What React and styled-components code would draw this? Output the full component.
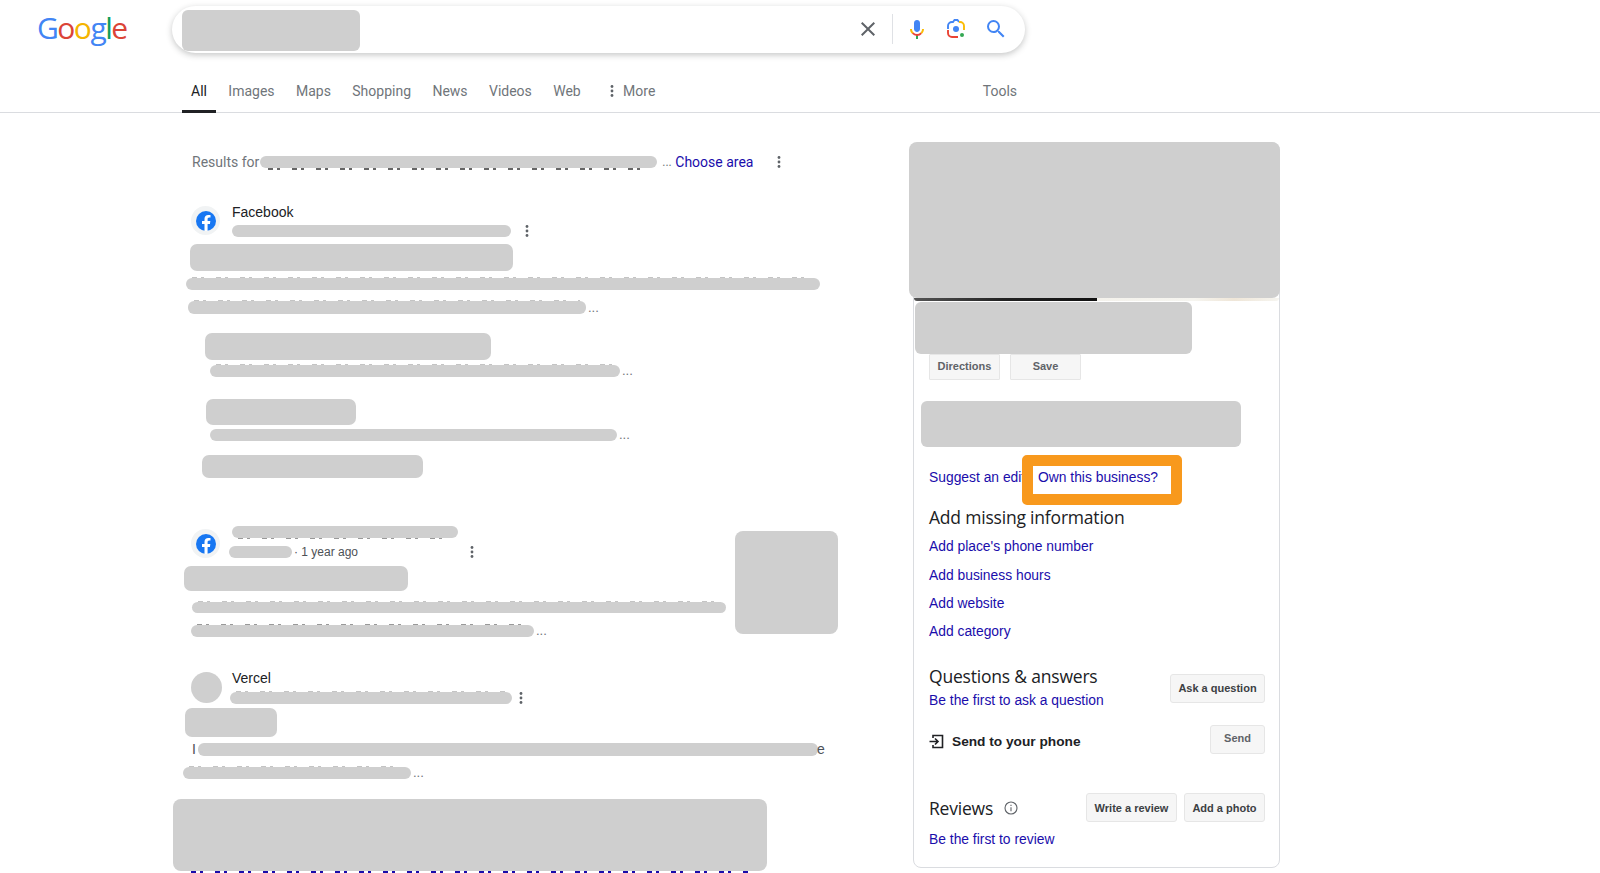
import React from 'react';
import styled, { createGlobalStyle, css } from 'styled-components';

const Global = createGlobalStyle`
  html, body { margin: 0; padding: 0; background: #fff; }
  body { font-family: "Liberation Sans", Arial, sans-serif; color: #202124; overflow: hidden; }
  * { box-sizing: border-box; }
`;

const Page = styled.div`
  width: 1600px;
  height: 873px;
  overflow: hidden;
`;

const TopRow = styled.header`
  display: flex;
  align-items: center;
  height: 57px;
  padding-left: 37px;
`;

const Logo = styled.div`
  width: 135px;
  margin-top: -2px;
  font-family: "Open Sans", sans-serif;
  font-size: 30px;
  letter-spacing: -1.5px;
  line-height: 40px;
`;

const Letter = styled.span`
  color: ${p => p.$c};
`;

const SearchBox = styled.div`
  width: 853px;
  height: 47px;
  margin-top: 1px;
  border-radius: 24px;
  background: #fff;
  box-shadow: 0 2px 6px rgba(32, 33, 36, 0.26);
  display: flex;
  align-items: center;
  padding-left: 10px;
`;

/* grey redaction block; $peek leaves a sliver of the covered line showing */
const Blot = styled.div`
  background: #cfcfcf;
  border-radius: ${p => p.$r || 6}px;
  width: ${p => p.$w}px;
  height: ${p => p.$h}px;
  margin-left: ${p => p.$x || 0}px;
  margin-top: ${p => p.$t || 0}px;
  flex: none;
  ${p => p.$peek && css`
    position: relative;
    &::after {
      content: "";
      position: absolute;
      left: ${p.$inset || 6}px;
      right: ${p.$inset || 6}px;
      ${p.$peek}: -${p.$sliver || 1}px;
      height: ${p.$sliver || 1}px;
      background: repeating-linear-gradient(90deg, ${p.$ink} 0 5px, transparent 5px 9px, ${p.$ink} 9px 12px, transparent 12px 24px);
    }
  `}
`;

const SearchIcons = styled.div`
  margin-left: auto;
  display: flex;
  align-items: center;
  padding-right: 17px;
`;

const IconSlot = styled.span`
  display: flex;
  margin-left: ${p => p.$l}px;
`;

const Divider = styled.span`
  width: 1px;
  height: 30px;
  background: #dfe1e5;
  margin-left: 12px;
`;

const Tabs = styled.nav`
  display: flex;
  height: 56px;
  border-bottom: 1px solid #dadce0;
  padding-left: 182px;
  font-family: Roboto, sans-serif;
  font-size: 14px;
  align-items: stretch;
`;

const Tab = styled.div`
  display: flex;
  align-items: center;
  gap: 9px;
  padding: 14px 9px 0;
  margin-right: 3.4px;
  margin-bottom: -1px;
  color: ${p => (p.$active ? '#202124' : '#70757a')};
  border-bottom: 3px solid ${p => (p.$active ? '#202124' : 'transparent')};
`;

const MoreTab = styled(Tab)`
  margin-left: 8px;
`;

const ToolsTab = styled(Tab)`
  margin-left: 306px;
`;

const Main = styled.main`
  display: flex;
  align-items: flex-start;
`;

const LeftCol = styled.div`
  width: 908px;
  padding-left: 173px;
  flex: none;
`;

const ResultsFor = styled.div`
  display: flex;
  align-items: center;
  height: 20px;
  margin: 39px 0 0 19px;
  font-family: Roboto, sans-serif;
  font-size: 14px;
  color: #70757a;
`;

const AfterStrip = styled.span`
  width: 18px;
  flex: none;
  padding-left: 5px;
  font-size: 12px;
`;

const ChooseArea = styled.a`
  color: #1a0dab;
`;

const Dots = styled.svg`
  flex: none;
  display: block;
  margin-left: ${p => p.$x || 0}px;
`;

const More = ({ x }) => (
  <Dots $x={x} width="4" height="14" viewBox="0 0 4 14" fill="#5f6368">
    <circle cx="2" cy="2.5" r="1.4" />
    <circle cx="2" cy="7" r="1.4" />
    <circle cx="2" cy="11.5" r="1.4" />
  </Dots>
);

const Source = styled.div`
  display: flex;
  align-items: center;
  margin: ${p => p.$t}px 0 0 18px;
`;

const Favicon = styled.div`
  width: ${p => (p.$blank ? 31 : 29)}px;
  height: ${p => (p.$blank ? 31 : 29)}px;
  margin-right: ${p => (p.$blank ? -2 : 0)}px;
  border-radius: 50%;
  background: ${p => (p.$blank ? '#cfcfcf' : '#f1f3f4')};
  display: flex;
  align-items: center;
  justify-content: center;
  flex: none;
`;

const SourceText = styled.div`
  margin-left: 12px;
  font-size: 14px;
  line-height: 18px;
`;

const SourceLine = styled.div`
  display: flex;
  align-items: center;
  margin-top: ${p => p.$gap}px;
`;

const Ago = styled.span`
  font-size: 12px;
  color: #4d5156;
  margin-left: 2px;
`;

const Ellipsis = styled.span`
  font-size: 13px;
  color: #70757a;
  margin-left: 2px;
  line-height: 12px;
`;

const Line = styled.div`
  display: flex;
  align-items: flex-end;
  margin-left: ${p => p.$x || 0}px;
  margin-top: ${p => p.$t || 0}px;
`;

const StrayLetter = styled.span`
  font-size: 14px;
  line-height: 13px;
  color: #4d5156;
  margin-left: ${p => p.$l || 0}px;
`;

const VideoRow = styled.div`
  display: flex;
  align-items: flex-start;
`;

const VideoText = styled.div`
  width: 562px;
  flex: none;
`;

const Panel = styled.aside`
  width: 367px;
  height: 726px;
  margin: 29px 0 0 5px;
  border: 1px solid #dadce0;
  border-radius: 8px;
  position: relative;
  flex: none;
`;

const PanelTopBlot = styled.div`
  position: absolute;
  top: -1px;
  left: -5px;
  width: 371px;
  height: 156px;
  background: #cfcfcf;
  border-radius: 8px;
`;

const MapStrip = styled.div`
  height: 3px;
  margin-top: 155px;
  border-radius: 0 0 3px 3px;
  background: linear-gradient(to right, #555 0, #222 90px, #111 183px, #f4f2ec 183px, #f6f5f0 280px, #efe6d8 320px, #f6f5f0 365px);
`;

const ActionRow = styled.div`
  display: flex;
  gap: 10px;
  margin-left: 15px;
`;

const GreyButton = styled.div`
  display: flex;
  align-items: center;
  justify-content: center;
  height: ${p => p.$h || 28}px;
  width: ${p => p.$w}px;
  margin-top: ${p => p.$t || 0}px;
  padding-bottom: ${p => p.$lift || 0}px;
  background: #f6f6f6;
  border: 1px solid #e6e6e6;
  border-radius: ${p => p.$r || 3}px;
  font-size: 11px;
  font-weight: 700;
  color: ${p => p.$ink || '#5f6368'};
  flex: none;
`;

const EditRow = styled.div`
  display: flex;
  align-items: flex-start;
  height: 50px;
  margin: 8px 0 0 15px;
`;

const Link = styled.a`
  display: block;
  color: #1a0dab;
  font-size: 13.85px;
  line-height: 18px;
`;

const SuggestLink = styled(Link)`
  width: 93px;
  margin-top: 13px;
  white-space: nowrap;
  flex: none;
`;

const Highlight = styled.div`
  position: relative;
  width: 160px;
  height: 50px;
  border: 11px solid #f8991d;
  border-radius: 5px;
  background: #fff;
  padding: 2px 0 0 5px;
  flex: none;
`;

const Section = styled.div`
  margin: ${p => p.$t || 0}px 14px 0 15px;
`;

const Heading = styled.h3`
  margin: 0;
  font-family: "Open Sans", sans-serif;
  font-weight: 400;
  font-size: 17.5px;
  line-height: 24px;
  letter-spacing: -0.2px;
  color: #202124;
`;

const SpacedLink = styled(Link)`
  margin-top: ${p => p.$t}px;
`;

const SplitRow = styled.div`
  display: flex;
  justify-content: space-between;
  align-items: center;
`;

const SendLabel = styled.div`
  display: flex;
  align-items: center;
  gap: 8px;
  margin-top: 4px;
  font-size: 13.7px;
  font-weight: 700;
  color: #202124;
`;

const ButtonPair = styled.div`
  display: flex;
  gap: 7px;
`;

const ReviewTitle = styled.div`
  display: flex;
  align-items: center;
  gap: 11px;
`;

const GoogleLogo = () => (
  <Logo aria-label="Google">
    <Letter $c="#4285f4">G</Letter>
    <Letter $c="#db4437">o</Letter>
    <Letter $c="#f4b400">o</Letter>
    <Letter $c="#4285f4">g</Letter>
    <Letter $c="#0f9d58">l</Letter>
    <Letter $c="#db4437">e</Letter>
  </Logo>
);

const FbIcon = () => (
  <svg width="20" height="20" viewBox="0 0 24 24">
    <circle cx="12" cy="12" r="12" fill="#1877f2" />
    <path
      fill="#fff"
      d="M16.7 15.5l.5-3.5h-3.3V9.8c0-1 .5-1.9 2-1.9h1.5v-3s-1.4-.2-2.7-.2c-2.7 0-4.5 1.7-4.5 4.6V12h-3v3.5h3V24h3.7v-8.5h2.8z"
    />
  </svg>
);

const ClearIcon = () => (
  <svg width="24" height="24" viewBox="0 0 24 24" fill="#5f6368">
    <path d="M19 6.41 17.59 5 12 10.59 6.41 5 5 6.41 10.59 12 5 17.59 6.41 19 12 13.41 17.59 19 19 17.59 13.41 12z" />
  </svg>
);

const MicIcon = () => (
  <svg width="24" height="24" viewBox="0 0 24 24">
    <path fill="#4285f4" d="M12 15c1.66 0 3-1.31 3-2.97V5.97C15 4.31 13.66 3 12 3S9 4.31 9 5.97v6.06C9 13.69 10.34 15 12 15z" />
    <path fill="#34a853" d="M11 18.08h2V22h-2z" />
    <path fill="#fbbc05" d="M7.05 16.87c-1.27-1.33-2.05-2.83-2.05-4.87h2c0 1.45.56 2.42 1.47 3.38v.32l-1.15 1.18z" />
    <path fill="#ea4335" d="M12 16.93a4.97 5.25 0 0 1-3.54-1.55l-1.41 1.49A6.95 7.35 0 0 0 12 19a6.95 7.35 0 0 0 5-2.2l-1.41-1.41A4.97 5.25 0 0 1 12 16.93z" />
    <path fill="#fbbc05" d="M17 12c0 1.4-.5 2.5-1.4 3.4l1.4 1.4c1.3-1.3 2-2.9 2-4.8z" />
  </svg>
);

const LensIcon = () => (
  <svg width="24" height="24" viewBox="0 0 24 24" fill="none" strokeWidth="1.9">
    <path stroke="#ea4335" d="M4 13v3a4 4 0 0 0 4 4h6" />
    <path stroke="#4285f4" d="M4 12V9a4 4 0 0 1 4-4h1l1.5-2h3L15 5" />
    <path stroke="#fbbc05" d="M15 5h1a4 4 0 0 1 4 4v4" />
    <circle cx="12" cy="12" r="3" fill="#4285f4" />
    <circle cx="18" cy="18" r="2" fill="#34a853" />
  </svg>
);

const SearchIcon = () => (
  <svg width="24" height="24" viewBox="0 0 24 24" fill="#4285f4">
    <path d="M15.5 14h-.79l-.28-.27A6.47 6.47 0 0 0 16 9.5 6.5 6.5 0 1 0 9.5 16c1.61 0 3.09-.59 4.23-1.57l.27.28v.79l5 4.99L20.49 19l-4.99-5zm-6 0C7.01 14 5 11.99 5 9.5S7.01 5 9.5 5 14 7.01 14 9.5 11.99 14 9.5 14z" />
  </svg>
);

const SendIcon = () => (
  <svg width="15" height="15" viewBox="0 0 15 15" fill="none" stroke="#202124" strokeWidth="1.6">
    <path d="M4 4V1.5h9.5v12H4V11" />
    <path d="M0.5 7.5h8M6 4.5l3 3-3 3" />
  </svg>
);

const InfoIcon = () => (
  <svg width="14" height="14" viewBox="0 0 14 14" fill="none" stroke="#5f6368" strokeWidth="1.1">
    <circle cx="7" cy="7" r="6" />
    <path d="M7 6.2v4M7 3.8v1.2" />
  </svg>
);

export default function App() {
  return (
    <Page>
      <Global />
      <TopRow>
        <GoogleLogo />
        <SearchBox>
          <Blot $w={178} $h={41} $t={2} />
          <SearchIcons>
            <IconSlot $l={0}><ClearIcon /></IconSlot>
            <Divider />
            <IconSlot $l={12}><MicIcon /></IconSlot>
            <IconSlot $l={15}><LensIcon /></IconSlot>
            <IconSlot $l={16}><SearchIcon /></IconSlot>
          </SearchIcons>
        </SearchBox>
      </TopRow>

      <Tabs>
        <Tab $active>All</Tab>
        <Tab>Images</Tab>
        <Tab>Maps</Tab>
        <Tab>Shopping</Tab>
        <Tab>News</Tab>
        <Tab>Videos</Tab>
        <Tab>Web</Tab>
        <MoreTab><More />More</MoreTab>
        <ToolsTab>Tools</ToolsTab>
      </Tabs>

      <Main>
        <LeftCol>
          <ResultsFor>
            Results for
            <Blot $x={1} $w={397} $h={12} $r={6} $peek="bottom" $ink="#666" $inset={8} $sliver={2} />
            <AfterStrip>...</AfterStrip>
            <ChooseArea>Choose area</ChooseArea>
            <More x={24} />
          </ResultsFor>

          <Source $t={31}>
            <Favicon><FbIcon /></Favicon>
            <SourceText>
              Facebook
              <SourceLine $gap={3}>
                <Blot $w={279} $h={12} $r={6} />
                <More x={14} />
              </SourceLine>
            </SourceText>
          </Source>
          <Blot $x={17} $t={6} $w={323} $h={27} $r={7} />
          <Line $x={13} $t={7}><Blot $w={634} $h={12} $r={6} $peek="top" $ink="#c4c4c4" /></Line>
          <Line $x={15} $t={11}><Blot $w={398} $h={13} $r={6} $peek="top" $ink="#c4c4c4" /><Ellipsis>...</Ellipsis></Line>

          <Blot $x={32} $t={19} $w={286} $h={27} $r={7} />
          <Line $x={37} $t={5}><Blot $w={410} $h={12} $r={6} $peek="top" $ink="#c4c4c4" /><Ellipsis>...</Ellipsis></Line>
          <Blot $x={33} $t={22} $w={150} $h={26} $r={7} />
          <Line $x={37} $t={4}><Blot $w={407} $h={12} $r={6} /><Ellipsis>...</Ellipsis></Line>
          <Blot $x={29} $t={14} $w={221} $h={23} $r={7} />

          <VideoRow>
            <VideoText>
              <Source $t={48}>
                <Favicon><FbIcon /></Favicon>
                <SourceText>
                  <Blot $w={226} $h={12} $r={6} $peek="bottom" $ink="#999" />
                  <SourceLine $gap={5}>
                    <Blot $x={-3} $w={63} $h={12} $r={6} />
                    <Ago>· 1 year ago</Ago>
                    <More x={112} />
                  </SourceLine>
                </SourceText>
              </Source>
              <Blot $x={11} $t={5} $w={224} $h={25} $r={7} />
              <Line $x={19} $t={11}><Blot $w={534} $h={11} $r={6} $peek="top" $ink="#c4c4c4" /></Line>
              <Line $x={18} $t={12}><Blot $w={343} $h={12} $r={6} $peek="top" $ink="#999" /><Ellipsis>...</Ellipsis></Line>
            </VideoText>
            <Blot $t={53} $w={103} $h={103} $r={8} />
          </VideoRow>

          <Source $t={32}>
            <Favicon $blank />
            <SourceText>
              Vercel
              <SourceLine $gap={4}>
                <Blot $x={-2} $w={282} $h={12} $r={6} $peek="top" $ink="#c4c4c4" />
                <More x={7} />
              </SourceLine>
            </SourceText>
          </Source>
          <Blot $x={12} $t={3} $w={92} $h={29} $r={7} />
          <Line $x={19} $t={6}>
            <StrayLetter>I</StrayLetter>
            <Blot $x={2} $w={620} $h={13} $r={6} />
            <StrayLetter $l={-1}>e</StrayLetter>
          </Line>
          <Line $x={10} $t={11}><Blot $w={228} $h={12} $r={6} $peek="top" $ink="#c4c4c4" /><Ellipsis>...</Ellipsis></Line>
          <Blot $t={20} $w={594} $h={72} $r={8} $peek="bottom" $ink="#1a0dab" $inset={18} $sliver={2} />
        </LeftCol>

        <Panel>
          <PanelTopBlot />
          <MapStrip />
          <Blot $x={1} $t={1} $w={277} $h={52} />
          <ActionRow>
            <GreyButton $w={71} $h={26} $r={1} $lift={2}>Directions</GreyButton>
            <GreyButton $w={71} $h={26} $r={1} $lift={2}>Save</GreyButton>
          </ActionRow>
          <Blot $x={7} $t={21} $w={320} $h={46} />
          <EditRow>
            <SuggestLink>Suggest an edit</SuggestLink>
            <Highlight><Link>Own this business?</Link></Highlight>
          </EditRow>
          <Section $t={0}>
            <Heading>Add missing information</Heading>
            <SpacedLink $t={8}>Add place's phone number</SpacedLink>
            <SpacedLink $t={11}>Add business hours</SpacedLink>
            <SpacedLink $t={10}>Add website</SpacedLink>
            <SpacedLink $t={10}>Add category</SpacedLink>
          </Section>
          <Section $t={24}>
            <SplitRow>
              <div>
                <Heading>Questions &amp; answers</Heading>
                <SpacedLink $t={3}>Be the first to ask a question</SpacedLink>
              </div>
              <GreyButton $w={95} $h={29} $t={3} $ink="#3c4043">Ask a question</GreyButton>
            </SplitRow>
          </Section>
          <Section $t={16}>
            <SplitRow>
              <SendLabel><SendIcon />Send to your phone</SendLabel>
              <GreyButton $w={55} $h={29} $lift={3}>Send</GreyButton>
            </SplitRow>
          </Section>
          <Section $t={39}>
            <SplitRow>
              <ReviewTitle><Heading>Reviews</Heading><InfoIcon /></ReviewTitle>
              <ButtonPair>
                <GreyButton $w={91} $h={29} $ink="#3c4043">Write a review</GreyButton>
                <GreyButton $w={81} $h={29} $ink="#3c4043">Add a photo</GreyButton>
              </ButtonPair>
            </SplitRow>
            <SpacedLink $t={8}>Be the first to review</SpacedLink>
          </Section>
        </Panel>
      </Main>
    </Page>
  );
}
